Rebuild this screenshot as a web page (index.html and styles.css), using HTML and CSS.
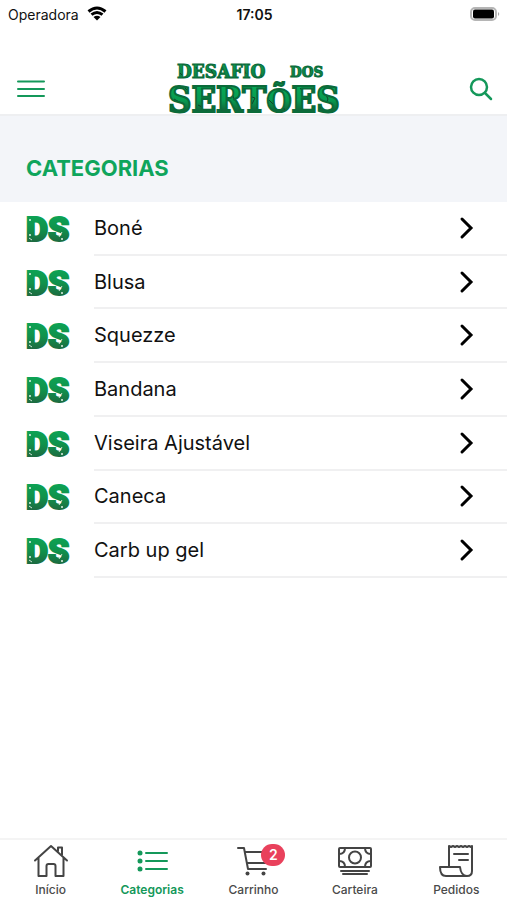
FILE: index.html
```html
<!DOCTYPE html>
<html lang="pt-BR">
<head>
<meta charset="utf-8">
<meta name="viewport" content="width=device-width, initial-scale=1">
<title>Categorias</title>
<link rel="stylesheet" href="styles.css">
</head>
<body>
<svg class="defs" aria-hidden="true">
  <defs>
    <linearGradient id="green" x1="0" y1="0" x2="0" y2="1">
      <stop offset="0" stop-color="#0bab58"/><stop offset=".5" stop-color="#10924c"/><stop offset="1" stop-color="#24553a"/>
    </linearGradient>
    <pattern id="worn" x="-4" y="-4" width="52" height="40" patternUnits="userSpaceOnUse">
      <rect width="52" height="40" fill="url(#green)"/>
      <path d="M7 29l3 2M40 23l-3 5" stroke="#cfe5d7" stroke-width="1"/>
      <circle cx="8" cy="11" r="1" fill="#e2f3e9"/><circle cx="8" cy="26" r="1" fill="#e2f3e9"/><circle cx="40" cy="30" r="1" fill="#e2f3e9"/>
    </pattern>
    <symbol id="ds" viewBox="0 0 44 32">
      <text class="ds-text" y="28" fill="url(#worn)" stroke="url(#worn)"><tspan x="0">D</tspan><tspan x="22">S</tspan></text>
    </symbol>
    <symbol id="chevron" viewBox="0 0 16 24"><path d="M3 3l9 9-9 9" fill="none" stroke="#000" stroke-width="3" stroke-linecap="round"/></symbol>
  </defs>
</svg>

<div class="status">
  <div class="carrier">Operadora
    <svg width="20" height="16" viewBox="0 0 20 16" fill="none" stroke="#000" stroke-width="3"><path d="M1.500 5.500Q10-1.500 18.500 5.500M4.500 8.700Q10 4.300 15.500 8.700"/><path d="M10 14.500L6.500 11Q10 8.300 13.500 11z" fill="#000" stroke="none"/></svg>
  </div>
  <time>17:05</time>
  <svg class="battery" width="32" height="16" viewBox="0 0 32 16"><rect x="2" y="2" width="25" height="12" rx="4" fill="#fff" stroke="#b5b5b5" stroke-width="2"/><rect x="4" y="3.500" width="21" height="9" rx="2"/><path d="M29 6q2.500 2 0 4z" fill="#aaa"/></svg>
</div>

<header class="header">
  <button class="icon-button" aria-label="Menu"><svg width="30" height="20" viewBox="0 0 30 20" stroke="#14985a" stroke-width="2" stroke-linecap="round"><path d="M2 2.500h26M2 10h26M2 17h26"/></svg></button>
  <svg class="logo" width="184" height="56" viewBox="0 0 184 56" role="img" aria-label="Desafio dos Sertões">
    <defs>
      <linearGradient id="logo-green" x1="0" y1="0" x2="0" y2="1"><stop offset="0" stop-color="#0b9c51"/><stop offset=".38" stop-color="#0b7a42"/><stop offset=".44" stop-color="#06a956"/><stop offset=".7" stop-color="#079a50"/><stop offset="1" stop-color="#17452c"/></linearGradient>
      <pattern id="cracks" width="184" height="56" patternUnits="userSpaceOnUse">
        <rect width="184" height="56" fill="url(#logo-green)"/>
        <path d="M14 12l4 4-2 4M30 6l3 5M45 9l4 7-3 3M62 13l5-3M77 5l3 8M93 12l4 5M128 8l4 6M145 7l-2 8M8 38l7 4-3 8M19 27l5 5M32 44l8 4 3 6M50 31l4 7-4 5M65 27l3 11 6 6M80 34l9 3-3 6M90 47l9-3M103 39l6 6M119 36l-4 5 4 9M134 27l6 7M147 45l8 2M158 30l4 8-3 7" fill="none" stroke="#143f28" stroke-width="1"/>
      </pattern>
    </defs>
    <g fill="url(#cracks)" stroke="#0b6b3a">
      <text class="logo-small" x="11" y="17">DESAFIO</text>
      <text class="logo-dos" x="124" y="16">DOS</text>
      <text class="logo-large" x="2" y="51">SERT<tspan class="logo-o">Õ</tspan>ES</text>
    </g>
  </svg>
  <button class="icon-button" aria-label="Buscar"><svg width="24" height="24" viewBox="0 0 24 24" fill="none" stroke="#14985a" stroke-width="2.500" stroke-linecap="round"><circle cx="10" cy="10" r="8"/><path d="M16 16l6 6"/></svg></button>
</header>

<main class="main">
  <div class="title"><h1>CATEGORIAS</h1></div>
  <ul class="list">
    <li><a href="#"><svg class="thumb" aria-hidden="true"><use href="#ds"/></svg><span class="cell">Boné<svg class="chevron"><use href="#chevron"/></svg></span></a></li>
    <li><a href="#"><svg class="thumb" aria-hidden="true"><use href="#ds"/></svg><span class="cell">Blusa<svg class="chevron"><use href="#chevron"/></svg></span></a></li>
    <li><a href="#"><svg class="thumb" aria-hidden="true"><use href="#ds"/></svg><span class="cell">Squezze<svg class="chevron"><use href="#chevron"/></svg></span></a></li>
    <li><a href="#"><svg class="thumb" aria-hidden="true"><use href="#ds"/></svg><span class="cell">Bandana<svg class="chevron"><use href="#chevron"/></svg></span></a></li>
    <li><a href="#"><svg class="thumb" aria-hidden="true"><use href="#ds"/></svg><span class="cell">Viseira Ajustável<svg class="chevron"><use href="#chevron"/></svg></span></a></li>
    <li><a href="#"><svg class="thumb" aria-hidden="true"><use href="#ds"/></svg><span class="cell">Caneca<svg class="chevron"><use href="#chevron"/></svg></span></a></li>
    <li><a href="#"><svg class="thumb" aria-hidden="true"><use href="#ds"/></svg><span class="cell">Carb up gel<svg class="chevron"><use href="#chevron"/></svg></span></a></li>
  </ul>
</main>

<nav class="tabs">
  <a href="#"><svg viewBox="0 0 40 36"><path d="M4 18.500L20 4l16 14.500M7.500 16v18H15.500V24q0-2 2-2h5q2 0 2 2v10h8V16M27 9V5.500h4V13"/></svg>Início</a>
  <a href="#" class="active" aria-current="page"><svg viewBox="0 0 40 36"><path d="M14 11h21M14 19h21M14 27h21"/><g class="solid"><circle cx="8" cy="11" r="2.500"/><circle cx="8" cy="19" r="2.500"/><circle cx="8" cy="27" r="2.500"/></g></svg>Categorias</a>
  <a href="#"><svg viewBox="0 0 40 36"><path d="M5 6h6l4 21h18M12 10h23l-2 11H14"/><g class="solid"><circle cx="14.500" cy="31.500" r="2"/><circle cx="30.500" cy="31.500" r="2"/></g></svg><span class="badge">2</span>Carrinho</a>
  <a href="#"><svg viewBox="0 0 40 36"><rect x="4" y="6" width="32" height="19" rx="1"/><circle cx="20" cy="15.500" r="6"/><path d="M4 12q6 0 6-6M36 12q-6 0-6-6M4 19q6 0 6 6M36 19q-6 0-6 6M6 29h28M8 32h24"/></svg>Carteira</a>
  <a href="#"><svg viewBox="0 0 40 36"><path d="M13 25V4l2 1 2-1 2 1 2-1 2 1 2-1 2 1 2-1 2 1 2-1 2 1 1-1v25q0 5-5 5H10q-6 0-6-9h20q1 9 7 9M18 12h14M23 18h9"/></svg>Pedidos</a>
</nav>
</body>
</html>
```
FILE: styles.css
```css
* { box-sizing: border-box; }
body {
  margin: 0;
  min-height: 100vh;
  display: flex;
  flex-direction: column;
  background: #fff;
  color: #111;
  font-family: Inter, "Liberation Sans", sans-serif;
}
a { color: inherit; text-decoration: none; }
svg { display: block; flex: none; }
.defs { position: absolute; width: 0; height: 0; }

.status {
  display: grid;
  grid-template-columns: 1fr auto 1fr;
  align-items: center;
  height: 28px;
  padding: 0 6px 0 8px;
  font-size: 14px;
}
.carrier { display: flex; align-items: center; gap: 8px; }
.status time { font-weight: 600; }
.battery { justify-self: end; }

.header {
  display: flex;
  align-items: center;
  justify-content: space-between;
  height: 88px;
  padding: 36px 14px 0 16px;
  border-bottom: 2px solid #eeeff1;
}
.icon-button { padding: 0; border: 0; background: none; }
.logo { overflow: visible; }
.logo-small, .logo-dos, .logo-large {
  font-family: "DejaVu Serif Condensed", "DejaVu Serif", serif;
  font-weight: 700;
  font-stretch: condensed;
  stroke-width: 1px;
}
.logo-small { font-size: 19px; }
.logo-dos { font-size: 15px; }
.logo-large { font-size: 36px; stroke-width: 2px; }
.logo-o { font-size: 32px; }

.main { flex: 1; }
.title { padding: 38px 26px 19px; background: #f3f5f9; }
h1 { margin: 0; color: #0fa55c; font-size: 22px; line-height: 29px; font-weight: 700; }
.list {
  display: grid;
  grid-auto-rows: 1fr;
  min-height: 376px;
  margin: 0;
  padding: 0;
  list-style: none;
}
.list a { display: flex; align-items: center; gap: 24px; height: 100%; padding-left: 26px; }
.thumb { width: 44px; height: 32px; }
.ds-text { font-family: Roboto, sans-serif; font-weight: 900; font-size: 34px; stroke-width: 2px; }
.cell {
  flex: 1;
  display: flex;
  align-items: center;
  justify-content: space-between;
  align-self: stretch;
  padding-right: 32px;
  border-bottom: 2px solid #f0f0f1;
  font-size: 20px;
}
.chevron { width: 16px; height: 24px; }

.tabs {
  display: grid;
  grid-template-columns: repeat(5, 1fr);
  height: 62px;
  border-top: 2px solid #f4f4f4;
  color: #4a4a4a;
  font-size: 12px;
  font-weight: 500;
  line-height: 16px;
}
.tabs a { position: relative; display: flex; flex-direction: column; align-items: center; gap: 4px; padding-top: 2px; }
.tabs svg { width: 40px; height: 36px; fill: none; stroke: #444; stroke-width: 2; stroke-linejoin: round; stroke-linecap: round; }
.tabs .solid { fill: #444; stroke: none; }
.tabs .active { color: #14985a; font-weight: 600; }
.tabs .active svg { stroke: #14985a; }
.tabs .active .solid { fill: #14985a; }
.badge {
  position: absolute;
  top: 4px;
  left: calc(50% + 8px);
  width: 24px;
  height: 22px;
  border-radius: 11px;
  background: #e9415c;
  color: #fff;
  font-size: 14px;
  font-weight: 600;
  line-height: 22px;
  text-align: center;
}
```
